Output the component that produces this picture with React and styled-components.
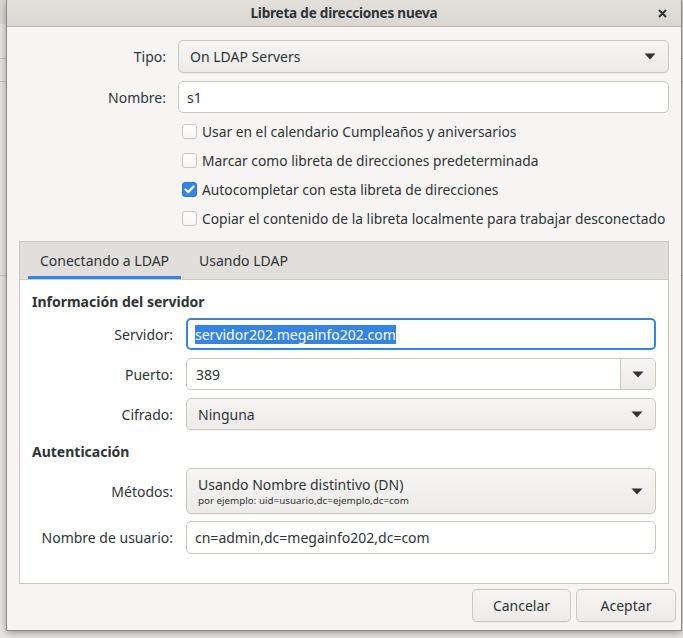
import React from 'react';
import styled, { createGlobalStyle } from 'styled-components';

const Global = createGlobalStyle`
  html, body {
    margin: 0;
    padding: 0;
  }
  body {
    width: 683px;
    height: 638px;
    overflow: hidden;
    background-color: #e9e8e6;
    background-image:
      linear-gradient(#c9c6c2, #c9c6c2),
      linear-gradient(#c9c6c2, #c9c6c2),
      linear-gradient(#c9c6c2, #c9c6c2),
      linear-gradient(#dcdad7, #dcdad7);
    background-size: 100% 1px, 100% 1px, 100% 1px, 100% 24px;
    background-position: 0 58px, 0 81px, 0 275px, 0 0;
    background-repeat: no-repeat;
    font-family: "Noto Sans", "Open Sans", sans-serif;
    color: #2e3436;
  }
`;

const Screen = styled.div`
  padding-left: 6px;
  width: 676px;
`;

const Dialog = styled.div`
  width: 676px;
  height: 631px;
  box-sizing: border-box;
  background: #f6f5f4;
  border: 1px solid #8d8a86;
  border-top: none;
  box-shadow: 0 2px 8px rgba(0, 0, 0, 0.35);
  display: flex;
  flex-direction: column;
`;

const TitleBar = styled.div`
  height: 26px;
  flex: none;
  display: flex;
  align-items: center;
  justify-content: center;
  position: relative;
  background: linear-gradient(#e3e0dc, #dad6d2);
  border-bottom: 1px solid #bfb8b1;
`;

const Title = styled.div`
  font-weight: 700;
  font-size: 13.5px;
  letter-spacing: -0.2px;
  color: #2e3436;
`;

const Close = styled.div`
  position: absolute;
  right: 14px;
  top: 9px;
  width: 9px;
  height: 9px;
  display: flex;
`;

const TopForm = styled.div`
  display: grid;
  grid-template-columns: 159px 1fr;
  column-gap: 12px;
  row-gap: 8px;
  padding: 13px 12px 0 0;
  align-items: center;
`;

const Label = styled.div`
  text-align: right;
  font-size: 14px;
  color: #2e3436;
  white-space: nowrap;
`;

const Combo = styled.div`
  height: ${p => p.$h || 32}px;
  box-sizing: border-box;
  border: 1px solid #cdc7c2;
  border-radius: 5px;
  background: linear-gradient(#f6f5f4, #edebe9);
  box-shadow: 0 1px rgba(0, 0, 0, 0.05);
  display: flex;
  align-items: center;
  justify-content: space-between;
  padding: 0 12px 0 11px;
  font-size: 14px;
`;

const Entry = styled.div`
  height: ${p => p.$h || 32}px;
  box-sizing: border-box;
  border: ${p => p.$focus ? '2px solid #3584e4' : '1px solid #cdc7c2'};
  border-radius: 5px;
  background: #ffffff;
  display: flex;
  align-items: center;
  padding: 0 ${p => p.$focus ? 7 : 8}px;
  font-size: 14px;
`;

const Selected = styled.span`
  background: #3584e4;
  color: #ffffff;
  line-height: 19px;
`;

const Spin = styled.div`
  height: 32px;
  box-sizing: border-box;
  border: 1px solid #cdc7c2;
  border-radius: 5px;
  background: #ffffff;
  display: flex;
  overflow: hidden;
  font-size: 14px;
`;

const SpinText = styled.div`
  flex: 1;
  display: flex;
  align-items: center;
  padding-left: 9px;
`;

const SpinButton = styled.div`
  width: 34px;
  border-left: 1px solid #cdc7c2;
  background: linear-gradient(#f6f5f4, #edebe9);
  display: flex;
  align-items: center;
  justify-content: center;
`;

const Checks = styled.div`
  grid-column: 2;
  display: flex;
  flex-direction: column;
  margin-top: -4px;
  padding-left: 4px;
`;

const CheckRow = styled.div`
  height: 29px;
  display: flex;
  align-items: center;
  gap: 5px;
  font-size: 13.8px;
  white-space: nowrap;
`;

const Box = styled.div`
  width: 15px;
  height: 15px;
  flex: none;
  box-sizing: border-box;
  border-radius: 3px;
  border: 1px solid ${p => p.$on ? '#2a76d5' : '#cdc7c2'};
  background: ${p => p.$on ? '#3584e4' : 'linear-gradient(#ffffff, #f6f5f4)'};
  display: flex;
  align-items: center;
  justify-content: center;
`;

const Notebook = styled.div`
  margin: 8px 12px 0 12px;
  height: 343px;
  box-sizing: border-box;
  border: 1px solid #cdc7c2;
  background: #ffffff;
  display: flex;
  flex-direction: column;
`;

const Tabs = styled.div`
  height: 37px;
  flex: none;
  background: #e1dedb;
  border-bottom: 1px solid #cdc7c2;
  display: flex;
  padding-left: 8px;
`;

const Tab = styled.div`
  height: 100%;
  box-sizing: border-box;
  padding: 3px 12px 0;
  display: flex;
  align-items: center;
  font-size: 14px;
  color: #2e3436;
  border-bottom: 3px solid ${p => p.$active ? '#3584e4' : 'transparent'};
  margin-right: 6px;
`;

const Page = styled.div`
  padding: 12px 12px 0 12px;
  display: flex;
  flex-direction: column;
`;

const Heading = styled.div`
  font-weight: 700;
  font-size: 14px;
  height: 20px;
  line-height: 20px;
  margin-bottom: ${p => p.$mb}px;
`;

const PageForm = styled.div`
  display: grid;
  grid-template-columns: 141px 1fr;
  column-gap: 13px;
  row-gap: ${p => p.$gap}px;
  align-items: center;
  margin-bottom: ${p => p.$mb || 0}px;
`;

const TwoLine = styled.div`
  display: flex;
  flex-direction: column;
  line-height: 18px;
`;

const Hint = styled.div`
  font-size: 9.8px;
  line-height: 13px;
  color: #2e3436;
`;

const Actions = styled.div`
  display: flex;
  justify-content: flex-end;
  gap: 5px;
  padding: 5px 5px 0 0;
`;

const Button = styled.div`
  width: ${p => p.$w}px;
  height: 33px;
  box-sizing: border-box;
  border: 1px solid #cdc7c2;
  border-radius: 5px;
  background: linear-gradient(#f6f5f4, #edebe9);
  box-shadow: 0 1px rgba(0, 0, 0, 0.05);
  display: flex;
  align-items: center;
  justify-content: center;
  font-size: 14px;
`;

const Arrow = () => (
  <svg width="12" height="7" viewBox="0 0 12 7">
    <path d="M0.5 0.5 L11.5 0.5 L6 6.5 Z" fill="#2e3436" />
  </svg>
);

const Tick = () => (
  <svg width="11" height="9" viewBox="0 0 11 9">
    <path d="M1.5 4.5 L4.3 7.2 L9.5 1.5" stroke="#ffffff" strokeWidth="2.2" fill="none" strokeLinecap="round" strokeLinejoin="round" />
  </svg>
);

const Check = ({ on, children }) => (
  <CheckRow>
    <Box $on={on}>{on && <Tick />}</Box>
    {children}
  </CheckRow>
);

export default function App() {
  return (
    <>
      <Global />
      <Screen>
        <Dialog>
          <TitleBar>
            <Title>Libreta de direcciones nueva</Title>
            <Close>
              <svg width="9" height="9" viewBox="0 0 9 9">
                <path d="M1 1 L8 8 M8 1 L1 8" stroke="#2e3436" strokeWidth="2" />
              </svg>
            </Close>
          </TitleBar>

          <TopForm>
            <Label>Tipo:</Label>
            <Combo $h={33}>On LDAP Servers<Arrow /></Combo>
            <Label>Nombre:</Label>
            <Entry>s1</Entry>
            <Checks>
              <Check>Usar en el calendario Cumpleaños y aniversarios</Check>
              <Check>Marcar como libreta de direcciones predeterminada</Check>
              <Check on>Autocompletar con esta libreta de direcciones</Check>
              <Check>Copiar el contenido de la libreta localmente para trabajar desconectado</Check>
            </Checks>
          </TopForm>

          <Notebook>
            <Tabs>
              <Tab $active>Conectando a LDAP</Tab>
              <Tab>Usando LDAP</Tab>
            </Tabs>
            <Page>
              <Heading $mb={6}>Información del servidor</Heading>
              <PageForm $gap={8} $mb={12}>
                <Label>Servidor:</Label>
                <Entry $focus><Selected>servidor202.megainfo202.com</Selected></Entry>
                <Label>Puerto:</Label>
                <Spin>
                  <SpinText>389</SpinText>
                  <SpinButton><Arrow /></SpinButton>
                </Spin>
                <Label>Cifrado:</Label>
                <Combo>Ninguna<Arrow /></Combo>
              </PageForm>
              <Heading $mb={6}>Autenticación</Heading>
              <PageForm $gap={7}>
                <Label>Métodos:</Label>
                <Combo $h={46}>
                  <TwoLine>
                    Usando Nombre distintivo (DN)
                    <Hint>por ejemplo: uid=usuario,dc=ejemplo,dc=com</Hint>
                  </TwoLine>
                  <Arrow />
                </Combo>
                <Label>Nombre de usuario:</Label>
                <Entry $h={33}>cn=admin,dc=megainfo202,dc=com</Entry>
              </PageForm>
            </Page>
          </Notebook>

          <Actions>
            <Button $w={99}>Cancelar</Button>
            <Button $w={100}>Aceptar</Button>
          </Actions>
        </Dialog>
      </Screen>
    </>
  );
}
